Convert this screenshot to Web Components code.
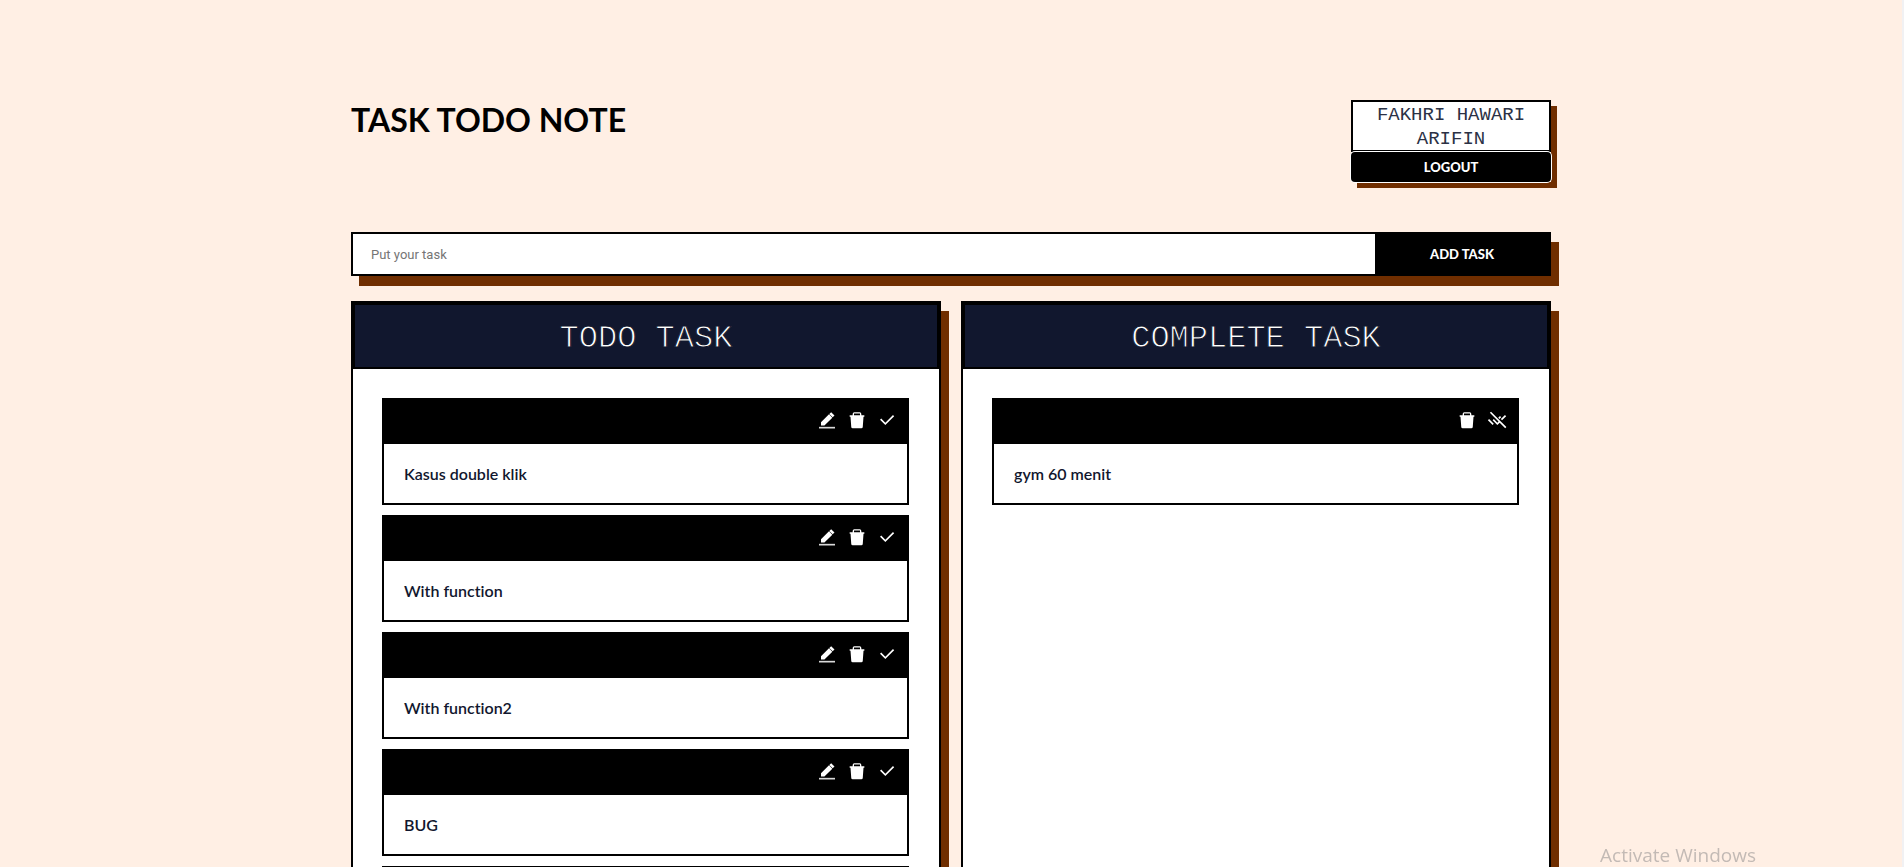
<!DOCTYPE html>
<html lang="id">
<head>
<meta charset="utf-8">
<meta name="viewport" content="width=device-width, initial-scale=1">
<title>Task Todo Note</title>
<style>
html { scrollbar-width: none; background: #ffefe4; }
body {
  margin: 0;
  border-right: 2px solid #f1f1f3;
  color: #11172e;
  font-family: Lato, "Open Sans", sans-serif;
  font-variant-ligatures: none;
  --ink: #000;
  --navy: #11172e;
  --shadow: #702e00;
}
</style>
</head>
<body>
<todo-app></todo-app>
<system-notice>Activate Windows</system-notice>

<script>
const ICONS = {
  edit: '<path d="M4.8 14.8 14.4 5.2l4 4-9.5 9.4H4.8zM14.8 4.8 17 2.6l4 4-2.2 2.2z"/><path d="M2.4 20.2h19.2v2H2.4z" opacity=".85"/>',
  trash: '<path fill-rule="evenodd" d="M3.2 6.2h3.6V4.8q0-2 2-2h6.4q2 0 2 2v1.4h3.6v1.9h-1l-.9 12.2q-.1 1.7-1.7 1.7H6.8q-1.6 0-1.7-1.7L4.2 8.1h-1zM8.4 6.2h7.2V4.3H8.4z"/>',
  check: '<path d="M10 15.172l9.192-9.193 1.415 1.414L10 18l-6.364-6.364 1.414-1.414z"/>',
  undo: '<path d="M4.84 1.98 3.43 3.39l10.38 10.38-1.41 1.41-4.24-4.24-1.41 1.41 5.66 5.66 2.83-2.83 6.6 6.6 1.41-1.41zM18.05 12.36 23 7.4 21.57 6l-4.94 4.94zM17.03 8.56l-1.42-1.42-2.12 2.12 1.42 1.42zM1.08 12.35l5.66 5.66 1.41-1.41-5.66-5.66z"/>'
};
const LABELS = { edit: 'Edit task', trash: 'Delete task', check: 'Complete task', undo: 'Restore task' };

function define(name, markup, setup) {
  customElements.define(name, class extends HTMLElement {
    constructor() {
      super();
      this.attachShadow({ mode: 'open' }).innerHTML =
        '<style>*{box-sizing:border-box}:host{display:block;box-sizing:border-box}</style>' + markup;
    }
    connectedCallback() { if (setup) setup(this, this.shadowRoot); }
  });
}

define('icon-button', `
<style>
button { display: block; width: 20px; height: 20px; padding: 0; border: 0; background: none; color: #fff; cursor: pointer; }
svg { display: block; width: 20px; height: 20px; fill: currentColor; }
</style>
<button type="button"></button>`, (host, root) => {
  const kind = host.getAttribute('kind');
  const button = root.querySelector('button');
  button.setAttribute('aria-label', LABELS[kind]);
  button.innerHTML = '<svg viewBox="0 0 24 24" aria-hidden="true">' + ICONS[kind] + '</svg>';
});

define('task-card', `
<style>
:host { border: 2px solid var(--ink); background: #fff; }
.bar { display: flex; justify-content: flex-end; align-items: center; gap: 10px; height: 44px; padding: 0 10px 4px; background: var(--ink); }
p { margin: 0; min-height: 59px; padding: 18px 20px 17px; font-size: 16px; line-height: 24px; font-weight: 600; color: var(--navy); }
</style>
<div class="bar"></div>
<p><slot></slot></p>`, (host, root) => {
  root.querySelector('.bar').innerHTML = host.getAttribute('actions').split(' ')
    .map(kind => '<icon-button kind="' + kind + '"></icon-button>').join('');
});

define('task-column', `
<style>
:host { border: 2px solid var(--ink); background: #fff; box-shadow: 8px 10px var(--shadow); }
h2 {
  margin: 0; padding: 14px 0 8px; border: 2px solid var(--ink); background: var(--navy); color: #fff;
  font: 400 32px/40px "Liberation Mono", monospace; text-align: center;
  -webkit-text-stroke: 1px var(--navy);
}
.list { display: grid; gap: 10px; padding: 29px 30px 29px 29px; }
</style>
<h2></h2>
<div class="list"><slot></slot></div>`, (host, root) => {
  root.querySelector('h2').textContent = host.getAttribute('heading');
});

define('user-panel', `
<style>
:host { width: 200px; box-shadow: 6px 6px var(--shadow); }
.name {
  padding: 1px 10px 0; height: 52px; border: 2px solid var(--ink); background: #fff; color: #2b3145;
  font: 400 19px/24px "Liberation Mono", monospace; text-align: center;
}
button {
  position: relative; display: block; width: 100%; height: 30px; padding: 0; border: 0; border-radius: 4px;
  background: var(--ink); box-shadow: 0 0 0 1px #fff; color: #fff;
  font: 900 13px/20px Lato, sans-serif; cursor: pointer;
}
</style>
<div class="name"><slot></slot></div>
<button type="button">LOGOUT</button>`);

define('task-form', `
<style>
form { display: flex; height: 44px; border: 2px solid var(--ink); background: #fff; box-shadow: 8px 10px var(--shadow); }
input { flex: 1; min-width: 0; padding: 1px 18px 0; border: 0; outline: 0; background: none; font: 400 13px/20px Roboto, sans-serif; color: var(--navy); }
input::placeholder { color: #757575; opacity: 1; }
button { width: 174px; padding: 0; border: 0; background: var(--ink); color: #fff; font: 900 13px/20px Lato, sans-serif; cursor: pointer; }
</style>
<form>
  <input type="text" placeholder="Put your task" aria-label="Put your task">
  <button type="submit">ADD TASK</button>
</form>`, (host, root) => {
  root.querySelector('form').addEventListener('submit', event => event.preventDefault());
});

define('system-notice', `
<style>
:host { position: fixed; right: 148px; bottom: -2px; font: 400 19px/28px "Open Sans", "Noto Sans", sans-serif; color: #c3bab5; pointer-events: none; white-space: nowrap; }
</style>
<slot></slot>`);

define('todo-app', `
<style>
:host { max-width: 1200px; margin: 0 auto; padding: 100px 0; }
header { display: flex; justify-content: space-between; align-items: flex-start; margin-bottom: 50px; }
h1 { margin: 0; font-size: 32px; line-height: 40px; font-weight: 700; color: var(--ink); }
.board { display: grid; grid-template-columns: 1fr 1fr; gap: 20px; margin-top: 25px; }
</style>
<header>
  <h1>TASK TODO NOTE</h1>
  <user-panel>FAKHRI HAWARI ARIFIN</user-panel>
</header>
<task-form></task-form>
<main class="board">
  <task-column heading="TODO TASK">
    <task-card actions="edit trash check">Kasus double klik</task-card>
    <task-card actions="edit trash check">With function</task-card>
    <task-card actions="edit trash check">With function2</task-card>
    <task-card actions="edit trash check">BUG</task-card>
    <task-card actions="edit trash check"></task-card>
  </task-column>
  <task-column heading="COMPLETE TASK">
    <task-card actions="trash undo">gym 60 menit</task-card>
  </task-column>
</main>`);
</script>
</body>
</html>
